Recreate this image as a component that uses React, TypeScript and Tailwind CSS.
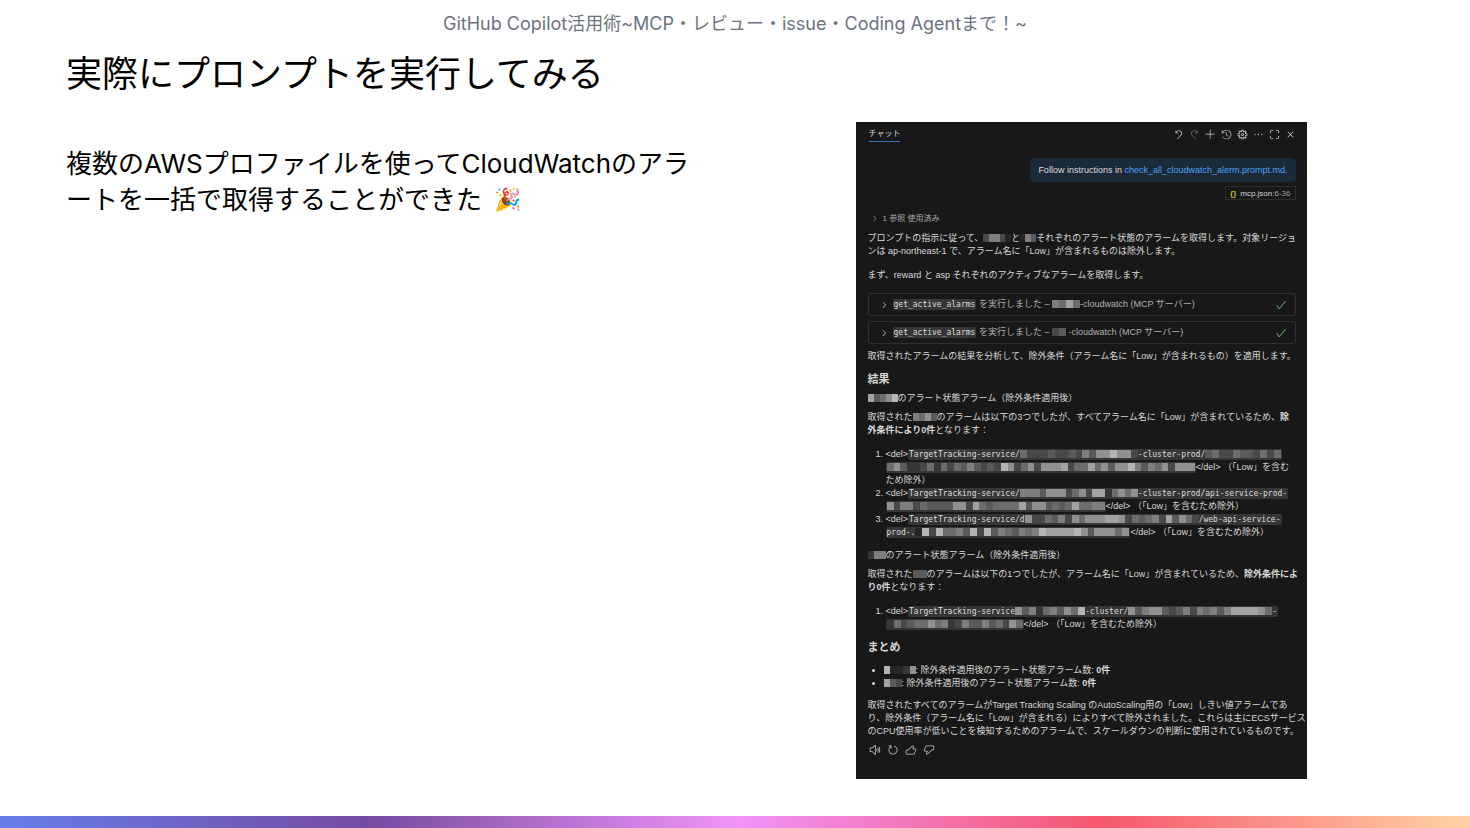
import React from 'react'
import { Maximize } from 'lucide-react'
import {
  VscAdd,
  VscCheck,
  VscChevronRight,
  VscClose,
  VscDiscard,
  VscEllipsis,
  VscGear,
  VscHistory,
  VscRedo,
  VscRefresh,
  VscThumbsdown,
  VscThumbsup,
  VscUnmute,
} from 'react-icons/vsc'

const toolbar = [
  { label: '元に戻す', icon: VscDiscard, tone: 'text-[#bdbdbd]' },
  { label: 'やり直し', icon: VscRedo, tone: 'text-[#6b6b6b]' },
  { label: '新しいチャット', icon: VscAdd, tone: 'text-[#d0d0d0]' },
  { label: '履歴', icon: VscHistory, tone: 'text-[#bdbdbd]' },
  { label: '設定', icon: VscGear, tone: 'text-[#e4e4e4]' },
  { label: 'その他', icon: VscEllipsis, tone: 'text-[#bdbdbd]' },
  { label: '最大化', icon: Maximize, tone: 'text-[#bdbdbd]' },
  { label: '閉じる', icon: VscClose, tone: 'text-[#d0d0d0]' },
]

const feedback = [
  { label: '読み上げ', icon: VscUnmute },
  { label: '再試行', icon: VscRefresh },
  { label: '役に立った', icon: VscThumbsup },
  { label: '役に立たなかった', icon: VscThumbsdown },
]

// Masked name: every digit is one cell, 0 is darkest and 9 is lightest
const Mosaic = ({ cells, width }: { cells: string; width: number }) => (
  <svg
    className="inline-block h-2 align-[-1px]"
    width={width}
    viewBox={`0 0 ${cells.length} 1`}
    preserveAspectRatio="none"
    shapeRendering="crispEdges"
    aria-hidden="true"
  >
    {cells.split('').map((cell, i) => {
      const v = 36 + Number(cell) * 18
      return <rect key={i} x={i} y={0} width={1} height={1} fill={`rgb(${v},${v},${v})`} />
    })}
  </svg>
)

const Code = ({ children }: { children: React.ReactNode }) => (
  <code className="rounded-xs bg-[#363636] px-px py-px font-['DejaVu_Sans_Mono','Liberation_Mono',monospace] text-[8px] leading-none text-[#dcdcdc]">
    {children}
  </code>
)

const ToolCall = ({ cells, width, name }: { cells: string; width: number; name: string }) => (
  <button className="flex h-[23px] w-full items-center rounded-xs border border-[#303030] pr-2 pl-[10px] text-left text-[#b0b0b0]">
    <VscChevronRight className="mr-1 size-[10px] text-[#d0d0d0]" />
    <span className="flex-1">
      <Code>get_active_alarms</Code> を実行しました – <Mosaic cells={cells} width={width} />
      {name} (MCP サーバー)
    </span>
    <VscCheck className="size-3 text-[#6fc276]" />
  </button>
)

const ChatPanel = () => {
  return (
    <section className="w-full max-w-[451px] bg-[#181818] pr-[11px] pb-[23px] pl-3 font-['Liberation_Sans','Noto_Sans_CJK_JP',sans-serif] text-[9px] leading-[13px] whitespace-nowrap text-[#d8d8d8]">
      {/* Panel header */}
      <header className="flex h-6 items-center justify-between pl-px">
        <button className="border-b border-[#2f74b5] text-[8px] leading-[14px] text-[#d8d8d8]">チャット</button>
        <div className="flex gap-[5px]">
          {toolbar.map(({ label, icon: Icon, tone }) => (
            <button key={label} aria-label={label} className={tone}>
              <Icon className="size-[11px]" />
            </button>
          ))}
        </div>
      </header>

      {/* Request */}
      <div className="mt-3 flex flex-col items-end gap-1">
        <p className="flex h-6 items-center rounded-sm bg-[#1b2a38] px-2 text-[#dcdcdc]">
          <span>
            Follow instructions in{' '}
            <a href="#" className="text-[#4ba3f5]">
              check_all_cloudwatch_alerm.prompt.md.
            </a>
          </span>
        </p>
        <p className="flex h-[14px] items-center gap-1 border border-[#2c2c2c] px-1 text-[8px]">
          <span className="font-bold text-[#c5c13a]">{'{}'}</span>
          <span>
            mcp.json<span className="text-[#a0a0a0]">:6-36</span>
          </span>
        </p>
      </div>

      {/* Answer */}
      <button className="mt-3 flex items-center gap-1 pl-[2px] text-[8px] text-[#a8a8a8]">
        <VscChevronRight className="size-[9px]" />1 参照 使用済み
      </button>
      <p className="mt-[7px]">
        プロンプトの指示に従って、
        <Mosaic cells="25520" width={28} />と<Mosaic cells="053" width={16} />
        それぞれのアラート状態のアラームを取得します。対象リージョ
        <br />
        ンは ap-northeast-1 で、アラーム名に「Low」が含まれるものは除外します。
      </p>
      <p className="mt-[11px]">まず、reward と asp それぞれのアクティブなアラームを取得します。</p>

      <div className="mt-[11px] flex flex-col gap-[5px]">
        <ToolCall cells="5474" width={28} name="-cloudwatch" />
        <ToolCall cells="23" width={14} name=" -cloudwatch" />
      </div>

      <p className="mt-[6px]">取得されたアラームの結果を分析して、除外条件（アラーム名に「Low」が含まれるもの）を適用します。</p>

      <h2 className="mt-[10px] text-[11px] leading-[13px] font-bold">結果</h2>
      <p className="mt-[6px]">
        <Mosaic cells="73468" width={30} />
        のアラート状態アラーム（除外条件適用後）
      </p>
      <p className="mt-[6px]">
        取得された
        <Mosaic cells="5463" width={24} />
        のアラームは以下の3つでしたが、すべてアラーム名に「Low」が含まれているため、<b>除</b>
        <br />
        <b>外条件により0件</b>となります：
      </p>

      <ol className="mt-[11px] list-decimal pl-[18px]">
        <li>
          &lt;del&gt;
          <Code>
            TargetTracking-service/
            <Mosaic cells="42223223253668662" width={118} />
            -cluster-prod/
            <Mosaic cells="34224332424" width={76} />
          </Code>
          <br />
          <Code>
            <Mosaic cells="4631124142435323286246266672447463668535462666" width={308} />
          </Code>
          &lt;/del&gt; （「Low」を含む
          <br />
          ため除外）
        </li>
        <li>
          &lt;del&gt;
          <Code>
            TargetTracking-service/
            <Mosaic cells="555366624627714646" width={118} />
            -cluster-prod/api-service-prod-
          </Code>
          <br />
          <Code>
            <Mosaic cells="625524333366274344447366343474455" width={218} />
          </Code>
          &lt;/del&gt; （「Low」を含むため除外）
        </li>
        <li>
          &lt;del&gt;
          <Code>
            TargetTracking-service/d
            <Mosaic cells="62243526466677624345273642" width={174} />
            /web-api-service-
          </Code>
          <br />
          <Code>
            prod-.
            <Mosaic cells="0828445382835435458777786366646" width={214} />
          </Code>
          &lt;/del&gt; （「Low」を含むため除外）
        </li>
      </ol>

      <p className="mt-[10px]">
        <Mosaic cells="155" width={18} />
        のアラート状態アラーム（除外条件適用後）
      </p>
      <p className="mt-[6px]">
        取得された
        <Mosaic cells="333" width={14} />
        のアラームは以下の1つでしたが、アラーム名に「Low」が含まれているため、<b>除外条件によ</b>
        <br />
        <b>り0件</b>となります：
      </p>

      <ol className="mt-[11px] list-decimal pl-[18px]">
        <li>
          &lt;del&gt;
          <Code>
            TargetTracking-service
            <Mosaic cells="6351453648" width={70} />
            -cluster/
            <Mosaic cells="635663235254535777764" width={144} />-
          </Code>
          <br />
          <Code>
            <Mosaic cells="14234464512533534264" width={136} />
          </Code>
          &lt;/del&gt; （「Low」を含むため除外）
        </li>
      </ol>

      <h2 className="mt-[10px] text-[11px] leading-[13px] font-bold">まとめ</h2>
      <ul className="mt-[10px] list-disc pl-[16px]">
        <li>
          <Mosaic cells="80016" width={32} />: 除外条件適用後のアラート状態アラーム数: <b>0件</b>
        </li>
        <li>
          <Mosaic cells="732" width={18} />: 除外条件適用後のアラート状態アラーム数: <b>0件</b>
        </li>
      </ul>

      <p className="mt-[9px]">
        取得されたすべてのアラームがTarget Tracking Scaling のAutoScaling用の「Low」しきい値アラームであ
        <br />
        り、除外条件（アラーム名に「Low」が含まれる）によりすべて除外されました。これらは主にECSサービス
        <br />
        のCPU使用率が低いことを検知するためのアラームで、スケールダウンの判断に使用されているものです。
      </p>

      <div className="mt-[6px] flex gap-[6px] pl-px text-[#c8c8c8]">
        {feedback.map(({ label, icon: Icon }) => (
          <button key={label} aria-label={label}>
            <Icon className="size-3" />
          </button>
        ))}
      </div>
    </section>
  )
}

const App = () => {
  return (
    <div className="flex min-h-screen flex-col bg-white font-['Inter','Noto_Sans_CJK_JP',sans-serif]" lang="ja">
      <header className="pt-[10px] text-center text-[18px] leading-[28px] text-[#6b7280]">
        GitHub Copilot活用術~MCP・レビュー・issue・Coding Agentまで！~
      </header>

      <main className="flex-1 pr-16 pl-[66px]">
        <h1 className="mt-3 text-[36px] leading-[48px] text-black">実際にプロンプトを実行してみる</h1>
        <div className="mt-6 grid grid-cols-2 gap-10">
          <p className="pt-6 text-[26px] leading-[36px] whitespace-nowrap text-black">
            複数のAWSプロファイルを使ってCloudWatchのアラ
            <br />
            ートを一括で取得することができた
            <span className="ml-3 align-text-top text-[22px] leading-[30px]">🎉</span>
          </p>
          <div className="flex justify-center">
            <ChatPanel />
          </div>
        </div>
      </main>

      <footer className="mt-auto h-3 bg-linear-[90deg,#667eea_0%,#764ba2_25%,#f093fb_50%,#f5576c_75%,#ffd3a5_100%]" />
    </div>
  )
}

export default App
